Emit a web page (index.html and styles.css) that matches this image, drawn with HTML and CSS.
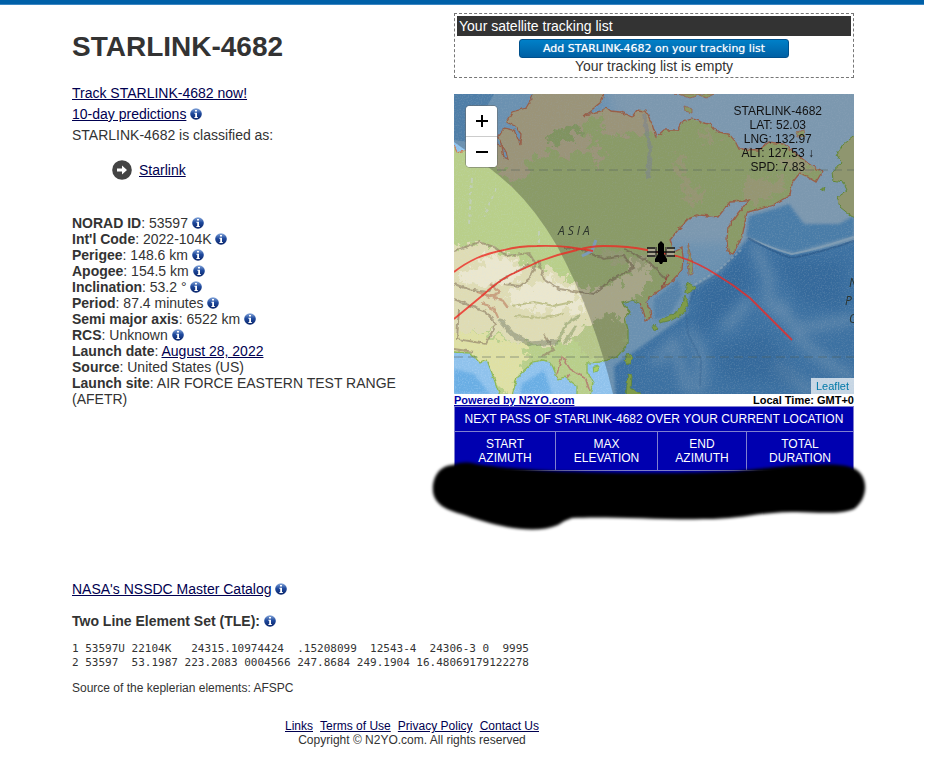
FILE: index.html
```html
<!DOCTYPE html>
<html lang="en">
<head>
<meta charset="utf-8">
<title>STARLINK-4682 satellite details</title>
<link rel="stylesheet" href="styles.css">
</head>
<body>
<svg class="defs" aria-hidden="true">
  <defs>
    <linearGradient id="ball" x1="0" y1="0" x2="0" y2="1">
      <stop offset="0" stop-color="#88a9dc"/><stop offset=".45" stop-color="#1f4a9e"/><stop offset="1" stop-color="#0a2468"/>
    </linearGradient>
    <symbol id="info" viewBox="0 0 12 12">
      <circle cx="6" cy="6" r="5.8" fill="url(#ball)"/>
      <path d="M5 2h2v1.600H5zM4.400 4.800H7v4.200h.8V10H4.400V9h.8V5.800h-.8z" fill="#fff"/>
    </symbol>
  </defs>
</svg>
<header class="topbar"></header>
<main class="page">
  <div class="columns">
    <section class="details">
      <h1>STARLINK-4682</h1>
      <div class="intro">
        <div><a href="#">Track STARLINK-4682 now!</a></div>
        <div><a href="#">10-day predictions</a> <svg class="info"><use href="#info"/></svg></div>
        <div>STARLINK-4682 is classified as:</div>
      </div>
      <div class="category">
        <svg class="arrow" viewBox="0 0 20 20"><circle cx="10" cy="10" r="9.800" fill="#444"/><path d="M5 8.500h5V5.500l5 4.500-5 4.500v-3H5z" fill="#fff"/></svg>
        <a href="#">Starlink</a>
      </div>
      <div class="facts">
        <div><b>NORAD ID</b>: 53597 <svg class="info"><use href="#info"/></svg></div>
        <div><b>Int'l Code</b>: 2022-104K <svg class="info"><use href="#info"/></svg></div>
        <div><b>Perigee</b>: 148.6 km <svg class="info"><use href="#info"/></svg></div>
        <div><b>Apogee</b>: 154.5 km <svg class="info"><use href="#info"/></svg></div>
        <div><b>Inclination</b>: 53.2 ° <svg class="info"><use href="#info"/></svg></div>
        <div><b>Period</b>: 87.4 minutes <svg class="info"><use href="#info"/></svg></div>
        <div><b>Semi major axis</b>: 6522 km <svg class="info"><use href="#info"/></svg></div>
        <div><b>RCS</b>: Unknown <svg class="info"><use href="#info"/></svg></div>
        <div><b>Launch date</b>: <a href="#">August 28, 2022</a></div>
        <div><b>Source</b>: United States (US)</div>
        <div><b>Launch site</b>: AIR FORCE EASTERN TEST RANGE (AFETR)</div>
      </div>
    </section>
    <aside class="side">
      <div class="tracking">
        <div class="tracking-title">Your satellite tracking list</div>
        <button class="add" type="button">Add STARLINK-4682 on your tracking list</button>
        <div>Your tracking list is empty</div>
      </div>
      <div class="map">
        <svg class="world" viewBox="0 0 400 300" preserveAspectRatio="xMidYMid slice">
          <defs>
            <filter id="soft" x="-20%" y="-20%" width="140%" height="140%"><feGaussianBlur stdDeviation="6"/></filter>
            <filter id="soft2" x="-20%" y="-20%" width="140%" height="140%"><feGaussianBlur stdDeviation="1.500"/></filter>
            <filter id="rough" x="-5%" y="-5%" width="110%" height="110%" color-interpolation-filters="sRGB"><feTurbulence type="fractalNoise" baseFrequency=".2" numOctaves="2" seed="4" result="n"/><feDisplacementMap in="SourceGraphic" in2="n" scale="4" xChannelSelector="R" yChannelSelector="G"/></filter>
            <filter id="patch" x="-5%" y="-5%" width="110%" height="110%" color-interpolation-filters="sRGB"><feTurbulence type="fractalNoise" baseFrequency=".12" numOctaves="4" seed="8" result="n"/><feDisplacementMap in="SourceGraphic" in2="n" scale="24" xChannelSelector="R" yChannelSelector="G"/><feGaussianBlur stdDeviation=".6"/></filter>
            <filter id="grain" x="0" y="0" width="100%" height="100%" color-interpolation-filters="sRGB"><feTurbulence type="fractalNoise" baseFrequency=".7" numOctaves="2" seed="2"/><feColorMatrix values="0 0 0 0 .8  0 0 0 0 .9  0 0 0 0 1  3 0 0 0 -1.400"/></filter>
            <path id="asia" d="M0 52L3 58 12 56 25 60 43 50 48 52 50 64 54 66 52 58 44 44 50 34 60 36 66 50 67 40 61 32 52 28 58 18 72 14 78 4 79 0H150L147 8 140 14 130 22 135 20 147 17 152 14 156 17 166 18 178 23 183 16 192 17 198 30 202 43 210 36 224 36 228 28 238 25 250 29 256 30 263 38 275 40 281 47 285 55 305 56 315 48 330 50 345 62 355 70 368 78 362 88 355 84 345 80 338 89 336 101 319 111 303 116 293 118 291 129 288 143 279 160 274 158 273 146 274 133 284 119 295 106 291 107 276 108 264 123 246 121 236 124 224 136 216 146 220 158 228 154 229 163 228 176 216 189 196 203 192 208 196 216 197 224 192 226 189 216 186 209 178 206 168 209 173 214 176 218 171 224 174 236 174 249 163 263 146 268 133 269 133 278 139 289 136 302H123V292L111 283 104 286 99 273 96 268 89 266 79 268 63 283 58 302H46L38 279 33 266 26 269 16 259 0 258z"/>
            <clipPath id="landclip"><use href="#asia"/></clipPath>
          </defs>
          <rect width="400" height="300" fill="#8fc2ec"/>
          <path d="M0 0H40L26 24 14 48 0 46z" fill="#6aa9e0"/>
          <path d="M150 -10H410V150H200z" fill="#a6cbea" filter="url(#soft)"/>
          <path d="M0 275L20 280 36 300H0zM68 290L90 276 98 300H66z" fill="#6aaee4" filter="url(#soft2)"/>
          <g filter="url(#soft2)">
            <path d="M400 147L365 156 337 160 315 153 294 144 268 178 237 197 233 220 205 240 180 258 160 272 162 310H410V147z" fill="#5197d8"/>
            <path d="M200 205L225 185 228 200 215 222 200 226z" fill="#6fade2"/>
            <path d="M400 122L385 130 350 130 335 110 320 115 295 122 292 142 315 152 340 158 400 142z" fill="#62a6e0"/>
          </g>
          <g fill="none" stroke="#9ecaf0" stroke-width="9" opacity=".6" filter="url(#soft)">
            <path d="M300 150L315 185 313 210 345 235 400 225"/><path d="M325 205L345 245 375 270 400 285"/><path d="M235 235L248 260 246 300M270 235L296 205"/><path d="M200 270L220 248 235 300M320 270L360 300"/>
          </g>
          <g fill="#3278bf" opacity=".3" filter="url(#soft)"><path d="M245 195L290 160 298 190 265 225 240 245zM320 165L390 168V215L350 210zM260 255L310 238 350 290 270 285z"/></g>
          <path d="M294 144Q325 157 338 160Q365 155 400 143" fill="none" stroke="#a8d0f0" stroke-width="2"/>
          <path d="M294 144Q325 161 338 164Q365 159 400 147" fill="none" stroke="#3876b8" stroke-width="2" opacity=".7"/>
          <path d="M284 158L264 180 242 193 232 218 234 240 247 265 246 292" fill="none" stroke="#3876b8" stroke-width="2" opacity=".3"/>
          <path d="M287 156L266 175 240 191" fill="none" stroke="#c3dff3" stroke-width="2" stroke-dasharray="3 2" opacity=".6"/>
          <rect width="400" height="300" filter="url(#grain)" opacity=".25"/>
          <use href="#asia" fill="#b9cf8a"/>
          <g clip-path="url(#landclip)">
            <g filter="url(#patch)">
              <path d="M70 -20H165L150 20 132 28 128 40 140 42 138 54 148 62 144 78 138 60 126 54 112 68 100 52 88 62 76 62 70 85 56 90 44 70 40 30zM152 5L205 10V42L190 38 165 42 148 40z" fill="#cfc6a2"/>
              <path d="M222 60L230 64 234 92 252 96 248 108 234 108 226 85zM290 88L325 82 332 96 300 108 286 100zM320 58L365 74 350 84 330 72zM245 34L262 46 252 54z" fill="#cfc4a0" opacity=".65"/>
              <path d="M92 42L122 28 130 38 100 50z" fill="#abc480"/>
              <path d="M-20 158L20 148 50 156 70 170 100 176 125 192 150 195 170 185 178 162 192 165 196 182 178 208 172 225 150 222 130 240 100 252 60 248 40 238 -20 240z" fill="#dfdcb4"/>
              <path d="M0 180L50 168 72 172 60 188 30 195zM60 192L100 184 126 202 130 216 80 218 52 206zM20 165L50 160 64 172 40 180z" fill="#ebe7ce"/>
              <path d="M-10 235L30 240 75 252 60 310 40 290 20 265 -10 265z" fill="#dfe0a4"/>
              <path d="M132 228L160 222 178 240 160 268 135 265 122 246z" fill="#b6c688"/>
              <path d="M178 160L192 166 186 178zM148 156L168 154 172 166 152 168z" fill="#c3ca98"/>
            </g>
            <g fill="none" stroke="#7f6f5b" filter="url(#rough)">
              <path d="M0 157L25 148 40 153 53 162 75 159 82 170 76 184 66 192 50 190M84 166L90 185 105 195 140 200 155 187 180 174 170 162 150 165 125 155 110 154 M0 190L14 195 32 198 45 187 62 178 76 170 M0 205L24 215 32 218 42 230 32 250 3 245 5 215 M170 155L195 168 212 185M90 240L100 256 88 262M0 255L20 258" stroke="#96866a" stroke-width="2" opacity=".7"/>
              <path d="M45 225L58 240 76 250 104 248" stroke="#6c7460" stroke-width="5" opacity=".45"/>
              <path d="M104 248L112 230 126 222M110 250L122 232" stroke="#7d925a" stroke-width="3" opacity=".5"/>
              <path d="M24 198L48 206M28 209L40 215 44 224M36 190L46 198 34 204M48 206L54 214" stroke="#bb7a5c" stroke-width="2.500" opacity=".6"/>
              <path d="M58 212L80 208 100 212 118 208M60 222L90 224 110 220" stroke="#bfc08a" stroke-width="2"/>
              <path d="M102 284L108 262 116 275 132 285 136 298M108 290L116 280" stroke="#b38570" stroke-width="1.500"/>
              <path d="M190 20L196 55 194 84" stroke="#a6b0ba" stroke-width="4" opacity=".6"/>
              <path d="M18 84L15 130M42 95L30 122M85 138L85 153" stroke="#c5cfc6" stroke-width="2" stroke-dasharray="4 3" opacity=".7"/>
              <path d="M214 180L206 200 198 212" stroke="#be6f5b" stroke-width="2"/>
            </g>
            <path d="M142 146L138 157 128 162" fill="none" stroke="#a5cff5" stroke-width="3"/>
            <rect width="400" height="300" filter="url(#grain)" opacity=".14"/>
          </g>
          <g filter="url(#rough)">
            <path d="M0 52L3 58 12 56 25 60 43 50 48 52 50 64 54 66 52 58 44 44 50 34 60 36 66 50 67 40 61 32 52 28 58 18 72 14 78 4 79 0M150 0L147 8 140 14 130 22 135 20 147 17 152 14 156 17 166 18 178 23 183 16 192 17 198 30 202 43 210 36 224 36 228 28 238 25 250 29 256 30 263 38 275 40 281 47 285 55 305 56 315 48 330 50 345 62 355 70 368 78 362 88 355 84 345 80 338 89 336 101 319 111 303 116 293 118 291 129 288 143 279 160 274 158 273 146 274 133 284 119 295 106 291 107 276 108 264 123 246 121 236 124 224 136 216 146 220 158 228 154 229 163 228 176 216 189 196 203 192 208 196 216 197 224 192 226 189 216 186 209" fill="none" stroke="#cb7f62" stroke-width="1.300"/>
            <path d="M186 209L178 206 168 209 173 214 176 218 171 224 174 236 174 249 163 263 146 268 133 269 133 278 139 289 136 302M123 302V292L111 283 104 286 99 273 96 268 89 266 79 268 63 283 58 302M46 302L38 279 33 266 26 269 16 259 0 258" fill="none" stroke="#90b957" stroke-width="1.300"/>
            <path d="M400 42L389 51 383 61 388 69 378 78 379 86 389 88 393 96 383 103 386 113 396 121 406 124V40z" fill="#bfc995" stroke="#83b347"/>
            <g fill="#b7cc88" stroke="#cb806b" stroke-width=".8"><path d="M234 149L237 162 239 180 235 181 234 165z"/><path d="M230 12L238 14 238 19 231 17z"/><path d="M342 38L350 36 351 42 344 43zM220 0H260L252 4 245 1 236 4 228 1z"/></g>
            <g fill="#a9cf62" stroke="#7eae4a" stroke-width=".8"><path d="M233 188L243 194 235 199 231 198zM231 201L234 211 229 220 218 226 206 229 205 225 219 221 227 212zM200 230L204 235 201 238 198 233z"/><path d="M174 259L178 264 174 271 171 266zM139 273L145 272 144 277 140 278zM174 280L178 282 177 294 190 302H172zM366 94L372 94 371 97z"/></g>
          </g>
          <path d="M0 48Q35 72 58 93Q82 116 103 152Q140 220 159 300H400V0H0z" fill="#000" opacity=".25"/>
          <path d="M43 76H400M0 263H400" stroke="#53615a" stroke-dasharray="9 5" opacity=".55"/>
          <g class="map-label"><text x="104" y="141" letter-spacing="3">ASIA</text><text x="395" y="193">N</text><text x="391" y="211">P</text><text x="395" y="229">O</text></g>
          <g fill="none" stroke="#ed2a24" stroke-width="1.800" opacity=".8">
            <path d="M0 178Q10 170 23 164Q35 159 50 156Q65 152 83 152Q112 151 139 157"/>
            <path d="M0 225L29 201Q43 188 56 181L86 167Q105 160 123 156Q137 152 150 152Q175 152 193 156L223 162Q245 169 263 181Q280 191 296 204L338 246"/>
          </g>
          <g>
            <path d="M207 147L210 150V160L213 165V168H209L208 170H206L205 168H201V165L204 160V150z"/>
            <path d="M194 153H202V163H194zM212 153H220V163H212z" fill="#aaa68f"/>
            <path d="M193 154H201M193 158H204M193 162H201M213 154H221M210 158H221M213 162H221" stroke="#111" stroke-width="1.700"/>
            <path d="M202 153V163M212 153V163" stroke="#111"/>
          </g>
        </svg>
        <div class="zoom"><button type="button" aria-label="Zoom in"><svg viewBox="0 0 16 16"><path d="M2 8h12M8 2v12"/></svg></button><button type="button" aria-label="Zoom out"><svg viewBox="0 0 16 16"><path d="M2 8h12"/></svg></button></div>
        <div class="position">STARLINK-4682<br>LAT: 52.03<br>LNG: 132.97<br>ALT: 127.53 ↓<br>SPD: 7.83</div>
        <a class="leaflet" href="#">Leaflet</a>
      </div>
      <div class="credit"><a href="#">Powered by N2YO.com</a><span>Local Time: GMT+0</span></div>
      <div class="passes">
        <table>
          <thead>
            <tr><th class="caption" colspan="4">NEXT PASS OF STARLINK-4682 OVER YOUR CURRENT LOCATION</th></tr>
            <tr><th class="start">START<br>AZIMUTH</th><th class="max">MAX<br>ELEVATION</th><th class="end">END<br>AZIMUTH</th><th>TOTAL<br>DURATION</th></tr>
          </thead>
          <tbody><tr><td colspan="4"></td></tr></tbody>
        </table>
        <svg class="marker" viewBox="0 0 444 76" aria-hidden="true">
          <defs><filter id="brush" x="-3%" y="-12%" width="106%" height="124%"><feGaussianBlur stdDeviation="1.800"/></filter></defs>
          <path filter="url(#brush)" d="M26 7C10 8 5 22 6 34C8 47 20 52 34 56C48 61 65 66 80 69C97 72 117 73 131 67Q138 62 145 60C180 58 230 62 286 61C320 60 340 53 370 54C395 55 416 56 427 51C440 42 442 22 431 13C424 6 402 6 382 7C345 8 325 13 290 14C240 16 170 15 125 13C98 11 65 9 49 6C40 4 34 4 26 7z"/>
        </svg>
      </div>
    </aside>
  </div>
  <section class="catalog">
    <div><a href="#">NASA's NSSDC Master Catalog</a> <svg class="info"><use href="#info"/></svg></div>
    <h2>Two Line Element Set (TLE): <svg class="info"><use href="#info"/></svg></h2>
    <pre>1 53597U 22104K   24315.10974424  .15208099  12543-4  24306-3 0  9995
2 53597  53.1987 223.2083 0004566 247.8684 249.1904 16.48069179122278</pre>
    <p>Source of the keplerian elements: AFSPC</p>
  </section>
</main>
<footer>
  <nav><a href="#">Links</a><a href="#">Terms of Use</a><a href="#">Privacy Policy</a><a href="#">Contact Us</a></nav>
  <div>Copyright © N2YO.com. All rights reserved</div>
</footer>
</body>
</html>
```
FILE: styles.css
```css
* { box-sizing: border-box; }
body { margin: 0; background: #fff; color: #333; font: 14px/16px "Liberation Sans", Arial, sans-serif; }
a { color: #000050; }
.defs { position: absolute; width: 0; height: 0; }
.topbar { height: 5px; margin-right: 25px; background: #0060a8; border-bottom: 1px solid #3c86c2; }
.page { padding: 8px 95px 0 72px; }
.columns { display: grid; grid-template-columns: minmax(0, 1fr) 400px; column-gap: 40px; min-height: 568px; }
h1 { margin: 18px 0 0; font-size: 28px; line-height: 32px; }
.intro { margin-top: 20px; line-height: 21px; }
.info { width: 12px; height: 12px; vertical-align: -1px; }
.category { display: flex; align-items: center; gap: 7px; margin: 14px 0 0 40px; }
.arrow { width: 20px; height: 20px; }
.facts { margin-top: 35px; }
.tracking { border: 1px dashed #777; padding: 2px; height: 65px; text-align: center; }
.tracking-title { background: #333; color: #fff; text-align: left; line-height: 20px; padding-left: 2px; }
.add { display: block; width: 270px; height: 19px; margin: 3px auto 0; padding: 0; border: 1px solid #00508c; border-radius: 3px; background: linear-gradient(#0080c8, #0060a4); color: #fff; font: 11px/16px "DejaVu Sans", sans-serif; text-shadow: 0 0 1px #ffffff99; }
.map { position: relative; height: 300px; margin-top: 16px; overflow: hidden; }
.world { display: block; width: 100%; height: 100%; }
.map-label { font: italic 12px "Open Sans", sans-serif; fill: #2c332c; }
.zoom { position: absolute; top: 12px; left: 12px; width: 31px; border-radius: 4px; background: #fff; box-shadow: 0 0 0 1px #66666680; overflow: hidden; }
.zoom button { display: flex; align-items: center; justify-content: center; width: 100%; height: 30px; padding: 0; border: 0; background: #fff; }
.zoom button + button { height: 31px; border-top: 1px solid #ccc; }
.zoom svg { width: 16px; height: 16px; fill: none; stroke: #000; stroke-width: 2; }
.position { position: absolute; top: 10px; right: 32px; color: #111; font-size: 12px; line-height: 14px; text-align: center; }
.leaflet { position: absolute; right: 0; bottom: 0; padding: 0 5px; background: #ffffffb3; color: #0078a8; font-size: 11px; text-decoration: none; }
.credit { display: flex; justify-content: space-between; color: #000; font-weight: bold; font-size: 11px; line-height: 12px; }
.credit a { color: #0000a8; }
.passes { position: relative; }
table { width: 100%; border-collapse: collapse; background: #0000b0; color: #fff; font-size: 12px; line-height: 14px; text-align: center; }
th, td { height: 39px; padding: 0; border: 1px solid #8080d0; font-weight: normal; }
td { height: 36px; }
.caption { height: 25px; }
.start { width: 101px; }
.max { width: 102px; }
.end { width: 89px; }
.marker { position: absolute; left: -27px; top: 52px; width: 444px; height: 76px; }
.catalog h2 { margin: 16px 0 0; font-size: 14px; line-height: 16px; }
pre { margin: 13px 0 0; font: 11px/14px "DejaVu Sans Mono", monospace; }
.catalog p { margin: 11px 0 0; font-size: 12px; line-height: 14px; }
footer { width: 254px; margin: 24px 0 0 285px; font-size: 12px; line-height: 14px; text-align: center; }
nav { display: flex; justify-content: space-between; }
```
